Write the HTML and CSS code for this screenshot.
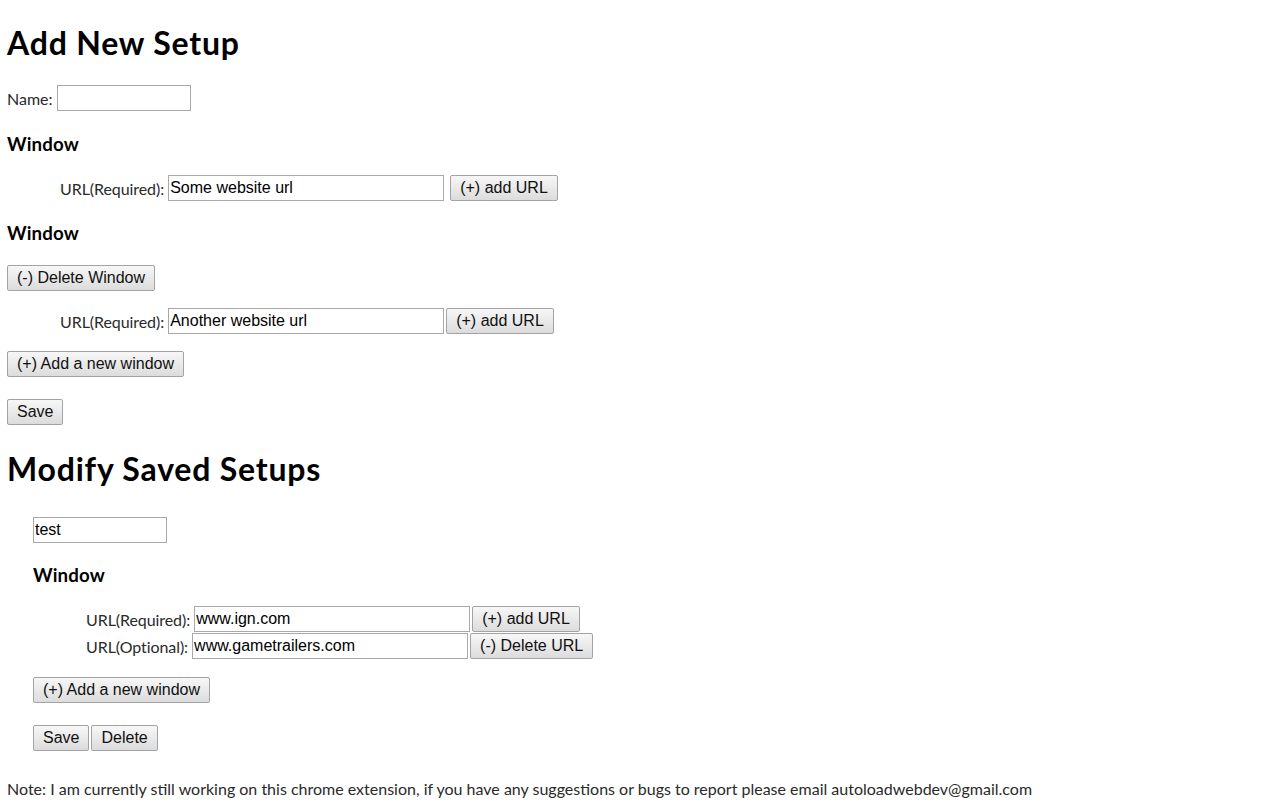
FILE: index.html
```html
<!DOCTYPE html>
<html>
<head>
<meta charset="utf-8">
<link rel="stylesheet" href="styles.css">
</head>
<body>
<div class="page">
  <h1 class="title t-first">Add New Setup</h1>
  <div class="row name-row">Name:&nbsp;<input class="field short" type="text"></div>

  <h3 class="win w1">Window</h3>
  <div class="row url-row r1"><span class="label">URL(Required):&nbsp;</span><input class="field url" type="text" value="Some website url"><button class="btn gap6">(+) add URL</button></div>

  <h3 class="win w2">Window</h3>
  <div class="row del-row"><button class="btn">(-) Delete Window</button></div>
  <div class="row url-row r2"><span class="label">URL(Required):&nbsp;</span><input class="field url" type="text" value="Another website url"><button class="btn gap2">(+) add URL</button></div>

  <div class="row addwin-row"><button class="btn">(+) Add a new window</button></div>
  <div class="row save-row"><button class="btn">Save</button></div>

  <h1 class="title t-second">Modify Saved Setups</h1>
  <div class="saved">
    <div class="row test-row"><input class="field short" type="text" value="test"></div>
    <h3 class="win w3">Window</h3>
    <div class="row url-row r3"><span class="label">URL(Required):&nbsp;</span><input class="field url" type="text" value="www.ign.com"><button class="btn gap2">(+) add URL</button></div>
    <div class="row url-row r4"><span class="label">URL(Optional):&nbsp;</span><input class="field url" type="text" value="www.gametrailers.com"><button class="btn gap2">(-) Delete URL</button></div>
    <div class="row addwin2-row"><button class="btn">(+) Add a new window</button></div>
    <div class="row save2-row"><button class="btn">Save</button><button class="btn gap2">Delete</button></div>
  </div>

  <p class="note">Note: I am currently still working on this chrome extension, if you have any suggestions or bugs to report please email autoloadwebdev@gmail.com</p>
</div>
</body>
</html>
```

FILE: styles.css
```css
html, body {
  margin: 0;
  padding: 0;
  background: #ffffff;
}

body {
  font-family: Lato, "Open Sans", sans-serif;
  font-size: 16px;
  color: #2a2a2a;
}

.page {
  padding: 21px 0 0 7px;
  display: flex;
  flex-direction: column;
  align-items: flex-start;
}

.title {
  margin: 0;
  font-size: 32px;
  font-weight: 700;
  letter-spacing: 0.8px;
  line-height: 43px;
  height: 43px;
  color: #000;
}

.t-second { margin-top: 22px; }

.win {
  margin: 0;
  font-size: 18.72px;
  font-weight: 700;
  letter-spacing: 0.15px;
  line-height: 25px;
  height: 25px;
  color: #000;
}

.row {
  display: flex;
  align-items: center;
  height: 26px;
  white-space: nowrap;
}

.label { letter-spacing: -0.07px; }

.name-row { margin-top: 21px; }
.w1 { margin-top: 21px; }
.r1 { margin-top: 18px; }
.w2 { margin-top: 20px; }
.del-row { margin-top: 19px; }
.r2 { margin-top: 17px; }
.addwin-row { margin-top: 17px; }
.save-row { margin-top: 22px; }

.saved {
  padding-left: 26px;
  display: flex;
  flex-direction: column;
  align-items: flex-start;
}

.test-row { margin-top: 27px; }
.w3 { margin-top: 20px; }
.r3 { margin-top: 18px; }
.r4 { margin-top: 1px; }
.addwin2-row { margin-top: 18px; }
.save2-row { margin-top: 22px; }

.url-row { padding-left: 53px; }

.field {
  box-sizing: border-box;
  height: 26px;
  border: 1px solid #a9a9a9;
  border-radius: 0;
  margin: 0;
  padding: 0 1px;
  font-family: "Liberation Sans", Arial, sans-serif;
  font-size: 16px;
  color: #000;
  background: #fff;
  outline: none;
}

.short { width: 134px; }
.url { width: 276px; }

.btn {
  box-sizing: border-box;
  height: 26px;
  margin: 0;
  padding: 0 9px;
  border: 1px solid #a3a3a3;
  border-radius: 2px;
  background: linear-gradient(#f7f7f7, #dcdcdc);
  font-family: "Liberation Sans", Arial, sans-serif;
  font-size: 16px;
  color: #111;
  line-height: 24px;
}

.gap6 { margin-left: 6px; }
.gap2 { margin-left: 2px; }

.note {
  margin: 27px 0 0 0;
  line-height: 22px;
  color: #2a2a2a;
}
```
